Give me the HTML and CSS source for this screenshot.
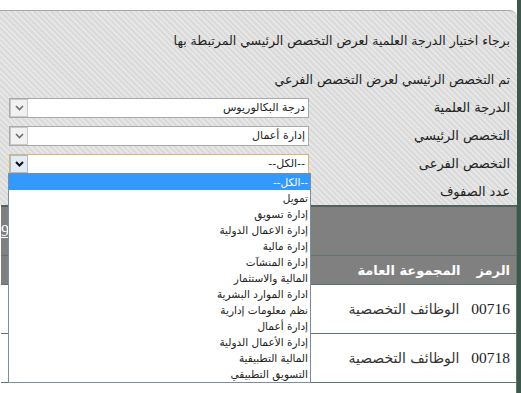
FILE: index.html
```html
<!DOCTYPE html>
<html lang="ar" dir="rtl">
<head>
  <meta charset="UTF-8" />
  <title>عرض التخصصات</title>
  <link rel="stylesheet" href="styles.css">
</head>
<body>
  <div class="page">
    <div class="panel">
      <p class="intro">برجاء اختيار الدرجة العلمية لعرض التخصص الرئيسي المرتبطة بها</p>
      <p class="note">تم التخصص الرئيسي لعرض التخصص الفرعي</p>

      <div class="field">
        <label>الدرجة العلمية</label>
        <div class="select">
          <span class="value">درجة البكالوريوس</span>
          <span class="arrow"><svg width="9" height="6" viewBox="0 0 9 6"><path d="M1 1 L4.5 4.5 L8 1" fill="none" stroke="#6d6d6d" stroke-width="1.6"/></svg></span>
        </div>
      </div>
      <div class="field">
        <label>التخصص الرئيسي</label>
        <div class="select">
          <span class="value">إدارة أعمال</span>
          <span class="arrow"><svg width="9" height="6" viewBox="0 0 9 6"><path d="M1 1 L4.5 4.5 L8 1" fill="none" stroke="#6d6d6d" stroke-width="1.6"/></svg></span>
        </div>
      </div>
      <div class="field">
        <label>التخصص الفرعى</label>
        <div class="select open">
          <span class="value">--الكل--</span>
          <span class="arrow"><svg width="9" height="6" viewBox="0 0 9 6"><path d="M1 1 L4.5 4.5 L8 1" fill="none" stroke="#111" stroke-width="2"/></svg></span>
          <ul class="options">
            <li class="selected">--الكل--</li>
            <li>تمويل</li>
            <li>إدارة تسويق</li>
            <li>إدارة الاعمال الدولية</li>
            <li>إدارة مالية</li>
            <li>إدارة المنشآت</li>
            <li>المالية والاستثمار</li>
            <li>ادارة الموارد البشرية</li>
            <li>نظم معلومات إدارية</li>
            <li>إدارة أعمال</li>
            <li>إدارة الأعمال الدولية</li>
            <li>المالية التطبيقية</li>
            <li>التسويق التطبيقي</li>
          </ul>
        </div>
      </div>
      <div class="field last">
        <label>عدد الصفوف</label>
      </div>
    </div>

    <table class="grid">
      <colgroup>
        <col class="col-code">
        <col class="col-group">
        <col>
      </colgroup>
      <tr class="pager">
        <td colspan="3"><a href="#">1</a> <a href="#">2</a> <a href="#">3</a> <a href="#">4</a> <a href="#">5</a> <a href="#">6</a> <a href="#">7</a> <a href="#">8</a> <a href="#">9</a></td>
      </tr>
      <tr class="head">
        <th class="code">الرمز</th>
        <th class="group">المجموعة العامة</th>
        <th></th>
      </tr>
      <tr>
        <td class="code">00716</td>
        <td class="group">الوظائف التخصصية</td>
        <td></td>
      </tr>
      <tr>
        <td class="code">00718</td>
        <td class="group">الوظائف التخصصية</td>
        <td></td>
      </tr>
      <tr class="spare">
        <td></td>
        <td></td>
        <td></td>
      </tr>
    </table>
  </div>
</body>
</html>
```

FILE: styles.css
```css
body {
  margin: 0;
  background: #fff;
  font-family: Tahoma, "DejaVu Sans", sans-serif;
  color: #222;
  overflow: hidden;
}
.page {
  width: 517px;
  padding-top: 10px;
  border-right: 4px solid #3d584d;
}
.panel {
  border-top: 1px solid #a8a8a8;
  border-top-right-radius: 8px;
  background: repeating-linear-gradient(45deg, #dadada 0, #dadada 2px, #e6e6e6 2px, #e6e6e6 4px);
  padding: 0 7px 0 0;
}
.intro {
  margin: 0;
  padding-top: 22px;
  font-size: 12.5px;
  line-height: 16px;
}
.note {
  margin: 23px 0 6px;
  font-size: 12.5px;
  line-height: 16px;
}
.field {
  display: flex;
  justify-content: space-between;
  align-items: center;
  height: 28px;
}
.field.last {
  height: 27px;
}
.field label {
  font-size: 13px;
  line-height: 16px;
}
.select {
  position: relative;
  display: flex;
  width: 300px;
  height: 20px;
  box-sizing: border-box;
  margin-left: 9px;
  border: 1px solid #a9a9a9;
  background: #fff;
}
.select .value {
  flex: 1;
  padding-right: 3px;
  font-size: 11px;
  line-height: 18px;
}
.select .arrow {
  display: flex;
  align-items: center;
  justify-content: center;
  width: 16px;
  border: 1px solid #c9c9c9;
  background: #f1f1f1;
}
.select.open {
  border-color: #d8b46c;
}
.select.open .arrow {
  border-color: #a7bdd3;
  background: #e3ecf5;
}
.options {
  position: absolute;
  top: 100%;
  left: -2px;
  width: 301px;
  margin: 0;
  padding: 0;
  list-style: none;
  background: #fff;
  border: 1px solid #7d8e9b;
  z-index: 2;
}
.options li {
  height: 16px;
  padding-right: 2px;
  font-size: 10.5px;
  line-height: 16px;
}
.options li.selected {
  background: #3399ff;
  color: #fff;
}
.grid {
  width: 516px;
  table-layout: fixed;
  border-collapse: collapse;
  border-top: 2px solid #4f625c;
  border-right: 1px solid #5f7370;
}
.col-code {
  width: 52px;
}
.col-group {
  width: 150px;
}
.grid td, .grid th {
  border-bottom: 1px solid #5f7370;
  padding: 0;
  white-space: nowrap;
}
.pager td {
  height: 46px;
  background: #808080;
  text-align: left;
  font-family: "Liberation Serif", serif;
  font-size: 16px;
}
.pager a {
  color: #fff;
}
.head th {
  height: 28px;
  background: #808080;
  color: #fff;
  font-size: 13px;
  text-align: right;
}
.grid td {
  height: 48px;
}
.grid .code {
  padding-right: 6px;
  font-family: "Liberation Serif", serif;
  font-size: 15.5px;
}
.head th.code {
  font-family: Tahoma, "DejaVu Sans", sans-serif;
  font-size: 13px;
}
.grid .group {
  padding-right: 5px;
  font-size: 14px;
  color: #333;
}
.head th.group {
  padding-right: 4px;
  color: #fff;
  font-size: 13px;
}
```
